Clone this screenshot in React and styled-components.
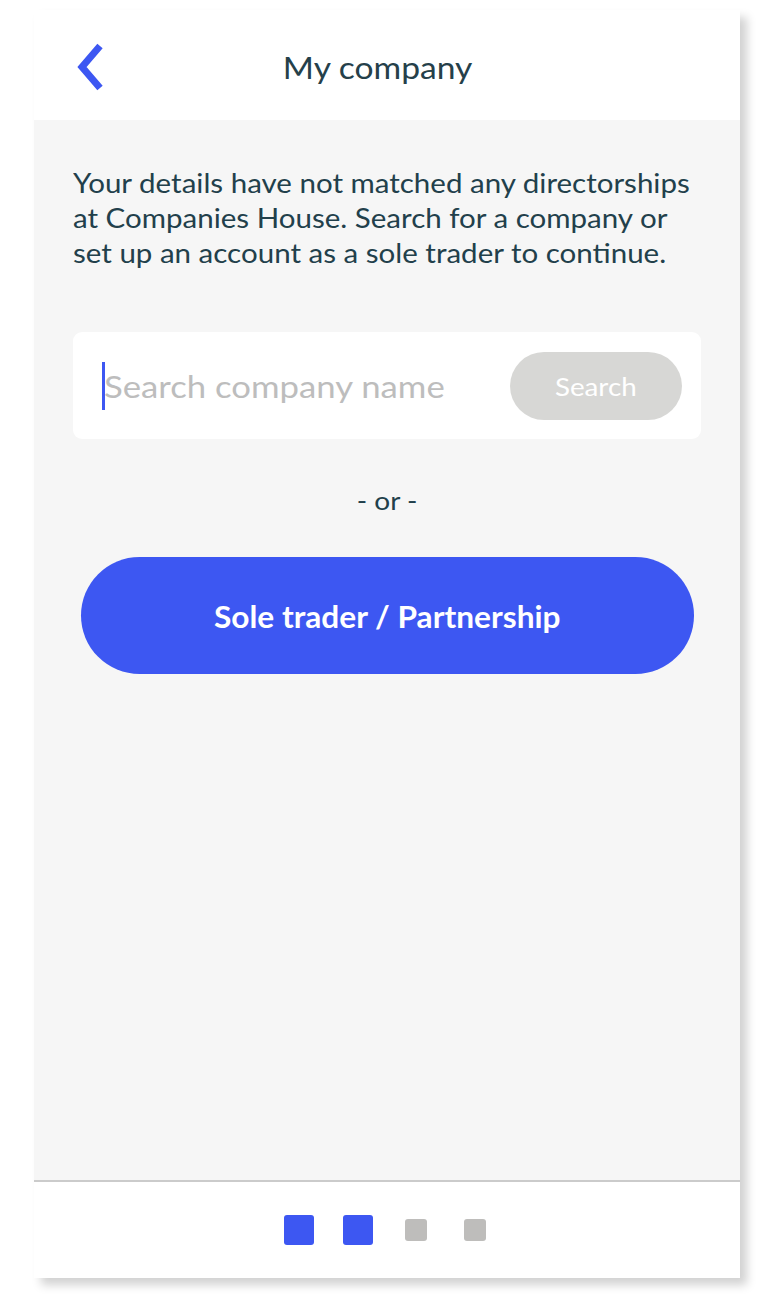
import React from 'react'
import styled, { createGlobalStyle } from 'styled-components'

const GlobalStyle = createGlobalStyle`
    body {
        margin: 0;
        background: #ffffff;
        font-family: Lato, "Open Sans", sans-serif;
    }
`

const Page = styled.div`
    padding: 10px 0 0 34px;
    height: 1294px;
    box-sizing: border-box;
`

const Phone = styled.div`
    width: 706px;
    height: 1268px;
    display: flex;
    flex-direction: column;
    background: #f6f6f6;
    box-shadow: 7px 7px 9px rgba(0, 0, 0, 0.18);
`

const Header = styled.div`
    height: 110px;
    background: #ffffff;
    display: grid;
    grid-template-columns: 90px 1fr 108px;
    align-items: center;
`

const Back = styled.div`
    padding-left: 41px;
    padding-top: 4px;
    display: flex;
    align-items: center;
`

const Title = styled.h1`
    margin: 4px 0 0;
    text-align: center;
    font-size: 30px;
    font-weight: 400;
    color: #25404a;
`

// the app's text is drawn a little wider than plain Lato
const Wide = styled.span`
    display: inline-block;
    transform: scaleX(${p => p.x || 1.12});
    transform-origin: ${p => p.origin || 'center'};
`

const Content = styled.div`
    flex: 1;
    padding: 46px 39px 0;
    display: flex;
    flex-direction: column;
`

const Intro = styled.p`
    margin: 0;
    width: 553px;
    font-size: 26px;
    line-height: 35px;
    color: #22404b;
    transform: scaleX(1.135);
    transform-origin: left;
`

const SearchCard = styled.div`
    margin-top: 61px;
    height: 107px;
    background: #ffffff;
    border-radius: 9px;
    display: flex;
    align-items: center;
    padding: 0 19px 0 29px;
    box-sizing: border-box;
`

const Field = styled.div`
    flex: 1;
    display: flex;
    align-items: center;
    font-size: 31px;
    color: #bdbdbd;
`

const Caret = styled.span`
    width: 3px;
    height: 48px;
    background: #3d57f2;
    margin-right: -1px;
`

const SearchButton = styled.button`
    width: 172px;
    height: 68px;
    border: none;
    border-radius: 34px;
    background: #d7d7d5;
    color: #ffffff;
    font-family: Lato, sans-serif;
    font-size: 25px;
`

const Or = styled.div`
    margin-top: 46px;
    text-align: center;
    font-size: 25px;
    line-height: 30px;
    color: #22404b;
`

const MainButton = styled.button`
    margin: 42px 7px 0 8px;
    height: 117px;
    border: none;
    border-radius: 59px;
    background: #3d57f2;
    color: #ffffff;
    font-family: Lato, sans-serif;
    font-weight: 700;
    font-size: 30px;
`

const Footer = styled.div`
    height: 96px;
    border-top: 2px solid #cbcbcb;
    background: #ffffff;
    display: flex;
    justify-content: center;
    align-items: center;
`

const Dots = styled.div`
    display: grid;
    grid-template-columns: repeat(4, 58.5px);
    justify-items: center;
    align-items: center;
`

const Dot = styled.span`
    width: ${p => (p.active ? 30 : 22)}px;
    height: ${p => (p.active ? 30 : 22)}px;
    border-radius: 3px;
    background: ${p => (p.active ? '#3d57f2' : '#bebdbb')};
`

const App = () => {
    return (
        <Page>
            <GlobalStyle />
            <Phone>
                <Header>
                    <Back>
                        <svg width="30" height="48" viewBox="0 0 30 48">
                            <polyline points="25,3 7,24 25,45" fill="none" stroke="#3d57f2" strokeWidth="7" />
                        </svg>
                    </Back>
                    <Title><Wide>My company</Wide></Title>
                    <div />
                </Header>
                <Content>
                    <Intro>
                        Your details have not matched any directorships at Companies House. Search for a company or set up an account as a sole trader to continue.
                    </Intro>
                    <SearchCard>
                        <Field>
                            <Caret />
                            <Wide origin="left">Search company name</Wide>
                        </Field>
                        <SearchButton><Wide x={1.11}>Search</Wide></SearchButton>
                    </SearchCard>
                    <Or><Wide x={1.12}>- or -</Wide></Or>
                    <MainButton><Wide x={1.055}>Sole trader / Partnership</Wide></MainButton>
                </Content>
                <Footer>
                    <Dots>
                        <Dot active />
                        <Dot active />
                        <Dot />
                        <Dot />
                    </Dots>
                </Footer>
            </Phone>
        </Page>
    )
}

export default App
